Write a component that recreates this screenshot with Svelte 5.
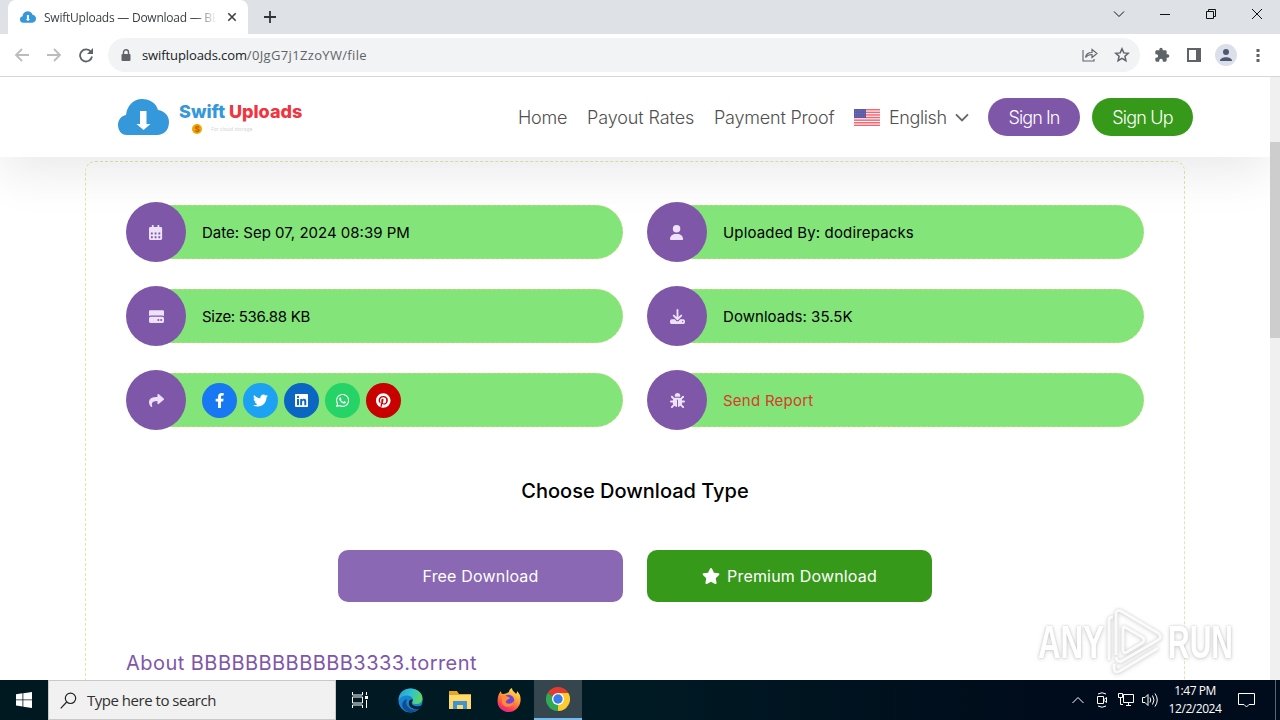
<script lang="ts">
  const details = [
    { icon: 'calendar', label: 'Date: Sep 07, 2024 08:39 PM' },
    { icon: 'user', label: 'Uploaded By: dodirepacks' },
    { icon: 'drive', label: 'Size: 536.88 KB' },
    { icon: 'download', label: 'Downloads: 35.5K' },
    { icon: 'share', label: '' },
    { icon: 'bug', label: 'Send Report' },
  ];

  const icons: Record<string, { box: string; path: string }> = {
    calendar: { box: '0 0 448 512', path: 'M0 464c0 27 21 48 48 48h352c27 0 48-21 48-48V192H0v272zm320-196c0-7 5-12 12-12h40c7 0 12 5 12 12v40c0 7-5 12-12 12h-40c-7 0-12-5-12-12v-40zm0 128c0-7 5-12 12-12h40c7 0 12 5 12 12v40c0 7-5 12-12 12h-40c-7 0-12-5-12-12v-40zM192 268c0-7 5-12 12-12h40c7 0 12 5 12 12v40c0 7-5 12-12 12h-40c-7 0-12-5-12-12v-40zm0 128c0-7 5-12 12-12h40c7 0 12 5 12 12v40c0 7-5 12-12 12h-40c-7 0-12-5-12-12v-40zM64 268c0-7 5-12 12-12h40c7 0 12 5 12 12v40c0 7-5 12-12 12H76c-7 0-12-5-12-12v-40zm0 128c0-7 5-12 12-12h40c7 0 12 5 12 12v40c0 7-5 12-12 12H76c-7 0-12-5-12-12v-40zM400 64h-48V16c0-9-7-16-16-16h-32c-9 0-16 7-16 16v48H160V16c0-9-7-16-16-16h-32c-9 0-16 7-16 16v48H48C21 64 0 85 0 112v80h448v-80c0-27-21-48-48-48z' },
    user: { box: '0 0 448 512', path: 'M224 256a128 128 0 1 0 0-256 128 128 0 0 0 0 256zm-46 48C80 304 0 384 0 482c0 17 13 30 30 30h388c17 0 30-13 30-30 0-98-80-178-178-178h-92z' },
    drive: { box: '0 0 512 512', path: 'M40 40h432q40 0 40 40v160q-24-20-52-20H52q-28 0-52 20V80q0-40 40-40zM52 268h408q52 0 52 52v108q0 48-48 48H48q-48 0-48-48V320q0-52 52-52zm268 72a34 34 0 1 0 0 68 34 34 0 0 0 0-68zm96 0a34 34 0 1 0 0 68 34 34 0 0 0 0-68z' },
    download: { box: '0 0 512 512', path: 'M288 32a32 32 0 1 0-64 0v242l-73-73a32 32 0 0 0-46 46l128 128a32 32 0 0 0 46 0l128-128a32 32 0 0 0-46-46l-73 73V32zM64 352c-35 0-64 29-64 64v32c0 35 29 64 64 64h384c35 0 64-29 64-64v-32c0-35-29-64-64-64H347l-46 45a64 64 0 0 1-90 0l-46-45H64zm368 56a24 24 0 1 1 0 48 24 24 0 0 1 0-48z' },
    share: { box: '0 0 512 512', path: 'M503.7 189.8 327.7 37.9C312.3 24.5 288 35.3 288 56v80.1C127.4 137.9 0 170.1 0 322.3c0 61.4 39.6 122.3 83.3 154.1 13.7 9.9 33.1-2.5 28.1-18.6C66.1 312.8 132.9 274.3 288 272.1V360c0 20.7 24.3 31.5 39.7 18.2l176-152c11.1-9.6 11.1-26.8 0-36.4z' },
    bug: { box: '0 0 512 512', path: 'M256 0c53 0 96 43 96 96v4c0 15-13 28-28 28H188c-15 0-28-13-28-28v-4c0-53 43-96 96-96zM41 105c13-12 33-12 46 0l64 64c1 1 2 2 3 4 11-8 25-13 38-13h128c14 0 27 5 38 13l3-4 64-64a32 32 0 0 1 46 46l-64 64-4 3c6 12 9 25 10 38h67a32 32 0 0 1 0 64h-64c0 25-5 48-15 69l6 4 64 64a32 32 0 0 1-46 46l-64-64c-24 22-55 37-89 40V240c0-9-7-16-16-16s-16 7-16 16v239c-34-3-65-18-89-40l-64 64a32 32 0 0 1-46-46l64-64 6-4c-10-21-15-44-15-69H32a32 32 0 0 1 0-64h67c1-14 4-27 10-38l-4-3-64-64c-12-13-12-33 0-46z' },
    star: { box: '0 0 576 512', path: 'M259.3 17.8 194 150.2 47.9 171.5c-26.2 3.8-36.7 36.1-17.7 54.6l105.7 103-25 145.5c-4.5 26.3 23.2 46 46.4 33.7L288 439.6l130.7 68.7c23.2 12.2 50.9-7.4 46.4-33.7l-25-145.5 105.7-103c19-18.5 8.5-50.8-17.7-54.6L382 150.2 316.7 17.8c-11.7-23.6-45.6-23.9-57.4 0z' },
    facebook: { box: '0 0 320 512', path: 'M279.1 288l14.2-92.7h-88.9v-60.1c0-25.4 12.4-50.1 52.2-50.1h40.4V6.3S260.4 0 225.4 0c-73.2 0-121.1 44.4-121.1 124.7v70.6H22.9V288h81.4v224h100.2V288z' },
    twitter: { box: '0 0 512 512', path: 'M459.4 151.7c.3 4.5.3 9.1.3 13.6 0 138.7-105.6 298.6-298.6 298.6-59.5 0-114.7-17.2-161.1-47.1 8.4 1 16.6 1.3 25.3 1.3 49.1 0 94.2-16.6 130.3-44.8-46.1-1-84.8-31.2-98.1-72.8 6.5 1 13 1.6 19.8 1.6 9.4 0 18.8-1.3 27.6-3.6-48.1-9.7-84.1-52-84.1-103v-1.3c14 7.8 30.2 12.7 47.4 13.3-28.3-18.8-46.8-51-46.8-87.4 0-19.5 5.2-37.4 14.3-53 51.7 63.7 129.3 105.3 216.4 109.8-1.6-7.8-2.6-15.9-2.6-24 0-57.8 46.8-104.9 104.9-104.9 30.2 0 57.5 12.7 76.7 33.1 23.7-4.5 46.5-13.3 66.6-25.3-7.8 24.4-24.4 44.8-46.1 57.8 21.1-2.3 41.6-8.1 60.4-16.2-14.3 20.8-32.2 39.3-52.6 54.3z' },
    linkedin: { box: '0 0 448 512', path: 'M416 32H31.9C14.3 32 0 46.5 0 64.3v383.4C0 465.5 14.3 480 31.9 480H416c17.6 0 32-14.5 32-32.3V64.3c0-17.8-14.4-32.3-32-32.3zM135.4 416H69V202.2h66.5V416zm-33.2-243c-21.3 0-38.5-17.3-38.5-38.5S80.9 96 102.2 96c21.2 0 38.5 17.3 38.5 38.5 0 21.3-17.2 38.5-38.5 38.5zm282.1 243h-66.4V312c0-24.8-.5-56.7-34.5-56.7-34.6 0-39.9 27-39.9 54.9V416h-66.4V202.2h63.7v29.2h.9c8.9-16.8 30.6-34.5 62.9-34.5 67.2 0 79.7 44.3 79.7 101.9V416z' },
    whatsapp: { box: '0 0 448 512', path: 'M380.9 97.1C339 55.1 283.2 32 223.9 32c-122.4 0-222 99.6-222 222 0 39.1 10.2 77.3 29.6 111L0 480l117.7-30.9c32.4 17.7 68.9 27 106.1 27h.1c122.3 0 224.1-99.6 224.1-222 0-59.3-25.2-115-67.1-157zM223.9 438.7c-33.2 0-65.7-8.9-94-25.7l-6.7-4-69.8 18.3L72 359.2l-4.4-7c-18.5-29.4-28.2-63.3-28.2-98.2 0-101.7 82.8-184.5 184.6-184.5 49.3 0 95.6 19.2 130.4 54.1 34.8 34.9 56.2 81.2 56.1 130.5 0 101.8-84.9 184.6-186.6 184.6zm101.2-138.2c-5.5-2.8-32.8-16.2-37.9-18-5.1-1.9-8.8-2.8-12.5 2.8-3.7 5.6-14.3 18-17.6 21.8-3.2 3.7-6.5 4.2-12 1.4-32.6-16.3-54-29.1-75.5-66-5.7-9.8 5.7-9.1 16.3-30.3 1.8-3.7.9-6.9-.5-9.7-1.4-2.8-12.5-30.1-17.1-41.2-4.5-10.8-9.1-9.3-12.5-9.5-3.2-.2-6.9-.2-10.6-.2-3.7 0-9.7 1.4-14.8 6.9-5.1 5.6-19.4 19-19.4 46.3 0 27.3 19.9 53.7 22.6 57.4 2.8 3.7 39.1 59.7 94.8 83.8 35.2 15.2 49 16.5 66.6 13.9 10.7-1.6 32.8-13.4 37.4-26.4 4.6-13 4.6-24.1 3.2-26.4-1.3-2.5-5-3.9-10.5-6.6z' },
    pinterest: { box: '0 0 496 512', path: 'M496 256c0 137-111 248-248 248-25.6 0-50.2-3.9-73.4-11.1 10.1-16.5 25.2-43.5 30.8-65 3-11.6 15.4-59 15.4-59 8.1 15.4 31.7 28.5 56.8 28.5 74.8 0 128.7-68.8 128.7-154.3 0-81.9-66.9-143.2-152.9-143.2-107 0-163.9 71.8-163.9 150.1 0 36.4 19.4 81.7 50.3 96.1 4.7 2.2 7.2 1.2 8.3-3.3.8-3.4 5-20.3 6.9-28.1.6-2.5.3-4.7-1.7-7.1-10.1-12.5-18.3-35.3-18.3-56.6 0-54.7 41.4-107.6 112-107.6 60.9 0 103.6 41.5 103.6 100.9 0 67.1-33.9 113.6-78 113.6-24.3 0-42.6-20.1-36.7-44.8 7-29.5 20.5-61.3 20.5-82.6 0-19-10.2-34.9-31.4-34.9-24.9 0-44.9 25.7-44.9 60.2 0 22 7.4 36.8 7.4 36.8s-24.5 103.8-29 123.2c-5 21.4-3 51.6-.9 71.2C65.4 450.9 0 361.1 0 256 0 119 111 8 248 8s248 111 248 248z' },
  };

  const socials = ['facebook', 'twitter', 'linkedin', 'whatsapp', 'pinterest'];
  const stripes = [0, 1, 2, 3, 4, 5, 6];
</script>

{#snippet glyph(name: string)}
  <svg class="glyph" viewBox={icons[name].box} aria-hidden="true"><path d={icons[name].path} /></svg>
{/snippet}

{#snippet cloud()}
  <svg class="cloud" viewBox="0 0 51 36" aria-hidden="true">
    <path fill="#3498db" d="M9 36C3 36 0 31 0 26c0-5 3-9 8-10C9 7 15 0 24 0c8 0 14 4 16 11 7 1 11 6 11 12 0 8-5 13-12 13z" />
    <path fill="#fff" d="M22 12h6.500v13h4L25.500 31l-7-6H22z" />
  </svg>
{/snippet}

<div class="screen">
  <div class="tabs">
    <div class="tab">
      {@render cloud()}
      <span class="tab-title">SwiftUploads — Download — BB</span>
      <svg width="10" height="10" viewBox="0 0 10 10"><path d="M1.3 1.3l7.4 7.4M8.7 1.3L1.3 8.7" stroke="#3c4043" stroke-width="1.6" /></svg>
    </div>
    <svg class="plus" width="12" height="12" viewBox="0 0 12 12"><path d="M6 0v12M0 6h12" stroke="#303338" stroke-width="1.8" /></svg>
    <div class="window-controls">
      <svg width="12" height="12" viewBox="0 0 12 12"><path d="M1 3.5l5 5 5-5" /></svg>
      <svg width="12" height="12" viewBox="0 0 12 12"><path d="M1 6.5h10" /></svg>
      <svg width="12" height="12" viewBox="0 0 12 12"><path d="M1.5 3.5h7v7h-7zM3.5 3V1.5h7v7H9" /></svg>
      <svg width="12" height="12" viewBox="0 0 12 12"><path d="M1 1l10 10M11 1L1 11" /></svg>
    </div>
  </div>

  <div class="toolbar">
    <svg width="16" height="16" viewBox="0 0 16 16" class="faded"><path d="M15 8H2M8 2L2 8l6 6" /></svg>
    <svg width="16" height="16" viewBox="0 0 16 16" class="faded"><path d="M1 8h13M8 2l6 6-6 6" /></svg>
    <svg width="16" height="16" viewBox="0 0 16 16" class="reload"><path d="M13 5A6 6 0 1 0 14 9.5" /><path class="solid" d="M15 1v6H9z" /></svg>
    <div class="address">
      <svg class="lock" width="10" height="13" viewBox="0 0 10 13"><rect x="0.5" y="5" width="9" height="7" rx="1" fill="#5f6368" /><path d="M2.5 5V3.3a2.5 2.5 0 0 1 5 0V5" fill="none" stroke="#5f6368" stroke-width="1.4" /></svg>
      <span class="url"><b>swiftuploads.com</b>/0JgG7j1ZzoYW/file</span>
      <svg class="thin" width="16" height="16" viewBox="0 0 16 16"><path d="M1 3v11h11v-2M3.5 10.5C4 7 6 5.5 10 5.5V2.5l5 4-5 4v-3c-3 0-5 1-6.5 3z" /></svg>
      <svg class="thin bold" width="16" height="16" viewBox="0 0 16 16"><path d="M8 1.8l1.8 4.1 4.4.4-3.3 2.9 1 4.4L8 11.3l-3.9 2.3 1-4.4-3.3-2.9 4.4-.4z" /></svg>
    </div>
    <div class="actions">
      <svg width="16" height="16" viewBox="0 0 24 24"><path d="M20.5 11H19V7c0-1.100-.9-2-2-2h-4V3.500a2.500 2.500 0 0 0-5 0V5H4c-1.100 0-2 .9-2 2v3.800h1.500a2.700 2.700 0 0 1 0 5.400H2V20c0 1.100.9 2 2 2h3.800v-1.500a2.700 2.700 0 0 1 5.400 0V22H17c1.100 0 2-.9 2-2v-4h1.500a2.500 2.500 0 0 0 0-5z" fill="#5f6368" /></svg>
      <svg width="16" height="16" viewBox="0 0 16 16"><path d="M1 1h14v14H1zM3 3v10h7V3z" fill="#5f6368" fill-rule="evenodd" /></svg>
      <svg width="22" height="22" viewBox="0 0 22 22"><circle cx="11" cy="11" r="11" fill="#dadfe9" /><circle cx="11" cy="8" r="3" fill="#4d5870" /><path d="M5 17c0-5 12-5 12 0z" fill="#4d5870" /></svg>
      <svg width="4" height="16" viewBox="0 0 4 16"><path d="M.5 2h3v3h-3zM.5 7h3v3h-3zM.5 12h3v3h-3z" fill="#5f6368" /></svg>
    </div>
  </div>

  <div class="viewport">
    <div class="page">
      <header>
        <div class="logo">
          {@render cloud()}
          <div class="wordmark">
            <div class="brand"><span class="blue">Swift</span> <span class="red">Uploads</span></div>
            <div class="tagline"><i>$</i><span>For cloud storage</span></div>
          </div>
        </div>
        <nav>
          <a class="home" href="/">Home</a>
          <a class="rates" href="/rates">Payout Rates</a>
          <a class="proof" href="/proof">Payment Proof</a>
          <svg class="flag" width="26" height="17" viewBox="0 0 26 17">
            <rect width="26" height="17" fill="#fff" />
            {#each stripes as s}<rect y={s * 2.6} width="26" height="1.5" fill="#f56573" />{/each}
            <rect width="12" height="9" fill="#5b59a8" />
            <path d="M1 2h10M1 4.500h10M1 7h10" stroke="#8583c4" stroke-width=".8" stroke-dasharray="1 1.200" />
          </svg>
          <span class="lang">English</span>
          <svg class="chevron" width="14" height="9" viewBox="0 0 14 9"><path d="M1 1.300l6 6 6-6" fill="none" stroke="#666" stroke-width="1.900" /></svg>
          <button class="pill sign-in"><span>Sign In</span></button>
          <button class="pill sign-up"><span>Sign Up</span></button>
        </nav>
      </header>

      <main>
        <div class="details">
          {#each details as item}
            <div class="detail">
              <div class="badge">{@render glyph(item.icon)}</div>
              <div class="bar">
                {#if item.icon === 'share'}
                  <div class="socials">
                    {#each socials as name}
                      <span class="social {name}">{@render glyph(name)}</span>
                    {/each}
                  </div>
                {:else}
                  <span class="label {item.icon}">{item.label}</span>
                {/if}
              </div>
            </div>
          {/each}
        </div>

        <h2>Choose Download Type</h2>

        <div class="choices">
          <button class="free"><span>Free Download</span></button>
          <button class="premium">{@render glyph('star')}<span>Premium Download</span></button>
        </div>

        <h3>About BBBBBBBBBBBB3333.torrent</h3>
      </main>
    </div>
    <div class="scrollbar"><div class="thumb"></div></div>
  </div>

  <div class="taskbar">
    <div class="start"><svg width="16" height="16" viewBox="0 0 16 16"><path fill="#fff" d="M0 2.200L6.500 1.300v6.200H0zM7.300 1.200L16 0v7.500H7.300zM0 8.300h6.500v6.200L0 13.600zM7.300 8.300H16V16l-8.700-1.300z" /></svg></div>
    <div class="search">
      <svg width="17" height="17" viewBox="0 0 17 17"><circle cx="10.500" cy="6.300" r="5.200" /><path d="M6.700 10L.7 16.300" /></svg>
      <span>Type here to search</span>
    </div>
    <div class="apps">
      <div class="app">
        <svg width="17" height="16" viewBox="0 0 17 16"><path d="M.5 0v3h10V0M.5 16v-3h10v3M.5 5h10v6H.500zM14.500 0v3M14.500 8v8" fill="none" stroke="#fff" /><path d="M13 4h3v3h-3z" fill="#fff" /></svg>
      </div>
      <div class="app">
        <svg width="25" height="25" viewBox="0 0 25 25">
          <defs>
            <linearGradient id="wave" x1="0" y1="0" x2="1" y2=".3"><stop stop-color="#259be0" /><stop offset=".6" stop-color="#32c5c8" /><stop offset="1" stop-color="#5ad468" /></linearGradient>
          </defs>
          <circle cx="12.500" cy="12.500" r="12" fill="#1685d2" />
          <path d="M.6 12C1 4.500 6 .5 12.500.5S25 5 24.500 11c-.3 4-4 5.500-8 5-3-.4-2-1.500-1.500-3C16 7 5 5 .6 12z" fill="url(#wave)" />
          <path d="M9 11c-3 7 4 13 12 10-5 5-13 4-16-1-2-4 0-8 4-9z" fill="#114d93" />
          <path d="M15 12c-2 2-2 5 2 6 3 .7 5 0 7-1-1 2-2 3-3 4-7 1-11-3-10-7 .3-2 2-3 4-2z" fill="#061f2c" />
        </svg>
      </div>
      <div class="app">
        <svg width="22" height="19" viewBox="0 0 22 19"><path d="M0 0h8l2 3h12v15H0z" fill="#e8a52b" /><path d="M0 4h22v14H0z" fill="#ffd96b" /><path d="M4 10h14v8h-4v-4H8v4H4z" fill="#3f95d2" /></svg>
      </div>
      <div class="app">
        <svg width="24" height="24" viewBox="0 0 24 24">
          <defs><linearGradient id="fire" x1=".8" y1="0" x2=".3" y2="1"><stop stop-color="#fff05a" /><stop offset=".45" stop-color="#ff9636" /><stop offset=".8" stop-color="#ff3d55" /><stop offset="1" stop-color="#d9258f" /></linearGradient></defs>
          <path d="M12 24C5 24 0 19 .6 12 .8 8 2 5 4 3c0 2 .5 3 2 3 2 0 4-1 6-2 0-2 1-3 3-4 0 3 3 4 4 6 1-1 1-2 1-3 3 3 4 6 3.500 10C23 19 18 24 12 24z" fill="url(#fire)" />
          <circle cx="11.500" cy="12.500" r="5.700" fill="#6b45d6" />
          <path d="M5 8c4-1 6 1 8 2-1 2-4 1-4 4 0 2 5 3 8-1 0 6-8 8-12 3z" fill="#ff8a39" />
        </svg>
      </div>
      <div class="app active">
        <svg width="24" height="24" viewBox="0 0 24 24">
          <path d="M12 12L1.600 6A12 12 0 0 1 22.400 6z" fill="#e33b2e" />
          <path d="M12 12L1.600 6A12 12 0 0 0 12 24l5-9z" fill="#31a851" />
          <path d="M12 12V6h10.400A12 12 0 0 1 12 24z" fill="#fccb30" />
          <circle cx="12" cy="12" r="6" fill="#fff" /><circle cx="12" cy="12" r="4.700" fill="#397ee8" />
        </svg>
      </div>
    </div>
    <div class="tray">
      <svg width="12" height="16" viewBox="0 0 12 16"><path d="M.5 11L6 5.500l5.500 5.500" /></svg>
      <svg class="camera" width="12" height="16" viewBox="0 0 12 16"><path d="M1.500 4.500h6v7h-6zM8 7.500l2.500-2v5L8 8.500M2 2q4-2.500 8 0M2 14q4 2.500 8 0" /></svg>
      <svg class="network" width="17" height="16" viewBox="0 0 17 16"><path d="M5.500 2.500h10v8h-10zM8 13.500h5M10.500 11v2M.5 1.500h4v4h-4zM2.500 6v6.500H5" /></svg>
      <svg class="volume" width="17" height="16" viewBox="0 0 17 16"><path d="M.5 5.500H3l3-3v11l-3-3H.5zM8 5.500q1.500 2.500 0 5M10.500 3.500q3 4.500 0 9M13 1.500q4.500 6.500 0 13" /></svg>
      <div class="clock"><span>1:47 PM</span><span>12/2/2024</span></div>
      <svg class="notices" width="17" height="16" viewBox="0 0 17 16"><path d="M.5 1.500h16v11h-5.500l-2.500 2.500L6 12.500H.5z" /></svg>
      <div class="peek"></div>
    </div>
  </div>

  <svg class="watermark" width="204" height="72" viewBox="0 0 204 72" aria-hidden="true">
    <g class="word">
      <text x="4" y="52" textLength="66" lengthAdjust="spacingAndGlyphs">ANY</text>
      <text x="134" y="52" textLength="65" lengthAdjust="spacingAndGlyphs">RUN</text>
    </g>
    <path d="M75 54V14q0-3 4-3M82 49V8q0-5 5-3l37 22q5 4 0 7L88 55q-5 2-6-4M89 20v24q0 4 4 2l15-9q4-3 0-6L89 20M80 58v4q0 6 6 3l38-23" />
  </svg>
</div>

<style>
  :global(body) { margin: 0; }

  * { box-sizing: border-box; }
  button { border: 0; padding: 0; font: inherit; color: inherit; }
  svg { flex-shrink: 0; display: block; }

  .screen {
    position: relative;
    width: 1280px;
    height: 720px;
    overflow: hidden;
    display: flex;
    flex-direction: column;
    background: #fff;
    font-family: Inter, 'Open Sans', sans-serif;
  }

  /* Browser chrome */
  .tabs {
    height: 34px;
    background: #dee1e6;
    display: flex;
    align-items: center;
    padding-left: 8px;
  }

  .tab {
    width: 240px;
    height: 34px;
    display: flex;
    align-items: center;
    padding: 0 11px 0 12px;
    background: #fff;
    border-radius: 8px 8px 0 0;
  }
  .tab .cloud { width: 16px; height: 12px; margin-right: 8px; }

  .tab-title {
    width: 172px;
    margin-right: 11px;
    white-space: nowrap;
    font: 12px 'Open Sans', sans-serif;
    letter-spacing: -0.24px;
    color: #3c4043;
    mask-image: linear-gradient(90deg, #000 152px, transparent 172px);
  }

  .plus { margin-left: 16px; }
  .window-controls { margin-left: auto; display: flex; gap: 34px; padding: 0 17px 6px 0; }
  .window-controls svg { fill: none; stroke: #111; stroke-width: 1; }

  .toolbar {
    height: 43px;
    border-bottom: 1px solid #d4d6d9;
    display: flex;
    align-items: center;
    padding: 0 20px 0 14px;
    gap: 16px;
  }
  .toolbar > svg { fill: none; stroke: #5f6368; stroke-width: 1.8; }
  .toolbar > .faded { stroke: #babcbe; }
  .reload .solid { fill: #5f6368; stroke: none; }

  .address {
    width: 1032px;
    height: 34px;
    margin-left: -2px;
    flex-shrink: 0;
    border-radius: 17px;
    background: #f1f3f4;
    display: flex;
    align-items: center;
    padding: 0 10px 0 13px;
    gap: 16px;
  }
  .url { margin: 0 auto 0 -5px; font: 13px 'Open Sans', sans-serif; letter-spacing: 0.34px; color: #5f6368; }
  .url b { font-weight: 400; letter-spacing: -0.1px; color: #202124; }
  .thin { fill: none; stroke: #5f6368; stroke-width: 1.1; }
  .thin.bold { stroke-width: 1.5; }
  .actions { display: flex; align-items: center; margin-left: -2px; gap: 16px; }
  .actions svg:nth-child(3) { margin: 0 3px 0 -3px; }

  /* Page */
  .viewport { height: 603px; display: flex; overflow: hidden; }
  .page { width: 1270px; height: 603px; overflow: hidden; }
  .scrollbar { width: 10px; background: #f0f0f0; padding-top: 65px; }
  .thumb { height: 196px; background: #cdcdcd; }

  header {
    position: relative;
    height: 80px;
    background: #fff;
    box-shadow: 0 16px 48px rgba(0, 0, 0, 0.085);
    display: flex;
    align-items: center;
    padding: 0 77px 0 118px;
  }

  .logo { display: flex; gap: 10px; align-items: center; }
  .logo .cloud { width: 51px; height: 36px; }
  .wordmark { height: 36px; }
  .brand { font: 800 18px/25px Inter, sans-serif; letter-spacing: 0; white-space: nowrap; }
  .blue { color: #3498db; }
  .red { color: #ee3540; }
  .tagline { display: flex; align-items: center; margin-left: 13px; gap: 9px; font-size: 5px; color: #d5d5d5; }
  .tagline i { width: 10px; height: 10px; border-radius: 50%; background: #f5a400; color: #b96400; font: bold 8px/10px Inter, sans-serif; text-align: center; }

  nav {
    margin-left: auto;
    display: flex;
    align-items: center;
    font-size: 18px;
    font-weight: 300;
    color: #505050;
    white-space: nowrap;
  }
  nav a { color: inherit; text-decoration: none; }
  .home { width: 69px; letter-spacing: -0.2px; }
  .rates { width: 127px; letter-spacing: -0.1px; }
  .proof { width: 140px; letter-spacing: -0.2px; }
  .lang { margin-left: 9px; width: 58px; letter-spacing: -0.4px; }
  .chevron { margin-left: 8px; margin-right: 19px; }
  .pill { height: 38px; border-radius: 19px; color: #fff; }
  .sign-in { width: 92px; background: #7f57a9; letter-spacing: -0.9px; }
  .sign-up { width: 101px; margin-left: 12px; background: #36991a; letter-spacing: -0.8px; }

  main {
    width: 1100px;
    height: 640px;
    margin: 4px 0 0 85px;
    border: 1px dashed #dde8ae;
    border-radius: 10px;
    padding: 40px;
    font-size: 16px;
    color: #000;
  }

  .details { width: 1018px; display: grid; grid-template-columns: 1fr 1fr; gap: 24px; }
  .detail { height: 60px; display: flex; align-items: center; }
  .badge {
    position: relative;
    z-index: 1;
    width: 60px;
    height: 60px;
    border-radius: 50%;
    background: #7f57a9;
    color: #eee2fa;
    display: grid;
    place-items: center;
  }
  .glyph { height: 15px; fill: currentColor; }

  .bar {
    flex: 1;
    height: 54px;
    margin-left: -30px;
    padding-left: 45px;
    border: 1px dashed #b4df73;
    border-radius: 0 27px 27px 0;
    background: #82e479;
    display: flex;
    align-items: center;
  }
  .label { white-space: nowrap; font-size: 15px; }
  .label.user { letter-spacing: 0.15px; }
  .label.drive { letter-spacing: -0.3px; }
  .label.download { letter-spacing: 0.05px; }
  .label.bug { letter-spacing: 0.25px; color: #da3a2c; }
  .socials { display: flex; gap: 6px; }
  .social { width: 35px; height: 35px; border-radius: 50%; display: grid; place-items: center; color: #fff; }
  .facebook { background: #1877f2; }
  .twitter { background: #1da1f2; }
  .linkedin { background: #0a66c2; }
  .whatsapp { background: #25d366; }
  .pinterest { background: #c80000; }

  h2 { width: 1018px; margin: 46px 0 0; font-size: 20px; line-height: 30px; font-weight: 500; text-align: center; }
  .choices { width: 1018px; margin-top: 44px; display: flex; justify-content: center; gap: 24px; }
  .choices button {
    width: 285px;
    height: 52px;
    border-radius: 10px;
    color: #fff;
    display: flex;
    align-items: center;
    justify-content: center;
    gap: 7px;
    letter-spacing: 0.18px;
  }
  .choices .glyph { height: 16px; }
  .free { background: #8a68b3; }
  .premium { background: #36991a; }
  h3 { margin: 46px 0 0; font-size: 20px; line-height: 30px; font-weight: 400; letter-spacing: 0.46px; color: #7f57a9; white-space: nowrap; }

  /* Taskbar */
  .taskbar { height: 40px; background: linear-gradient(90deg, #001820, #001a24 50%, #000c1b 80%); display: flex; color: #fff; }
  .start { width: 48px; display: grid; place-items: center; }
  .search {
    width: 288px;
    background: #f1f1f1;
    border: 1px solid #c8c8c8;
    display: flex;
    align-items: center;
    gap: 10px;
    padding-left: 11px;
    font: 15px 'Open Sans', sans-serif;
    letter-spacing: -0.48px;
    color: #303030;
  }
  .search svg { fill: none; stroke: #222; stroke-width: 1.2; }
  .apps { display: flex; }
  .app { width: 49.33px; display: grid; place-items: center; }
  .app:first-child { width: 50px; padding-right: 2px; }
  .app.active { width: 48px; background: #35464f; border-bottom: 2px solid #76b9ed; }
  .tray { margin-left: auto; display: flex; align-items: center; }
  .tray svg { fill: none; stroke: #fff; stroke-width: 1; margin-right: 12px; }
  .tray .camera { margin-right: 10px; }
  .tray .network { margin-right: 7px; }
  .tray .volume { margin-right: 7px; }
  .clock { width: 58px; margin-right: 14px; display: flex; flex-direction: column; text-align: center; font: 12px/18px 'Open Sans', sans-serif; letter-spacing: -0.45px; }
  .tray .notices { margin-right: 20px; }
  .peek { width: 5px; height: 40px; border-left: 1px solid #5b6371; }

  .watermark {
    position: absolute;
    left: 1034px;
    top: 606px;
    fill: none;
    stroke: rgba(255, 255, 255, 0.9);
    stroke-width: 3;
    filter: drop-shadow(0 0 1px #8885) drop-shadow(0 1px 2px #8885);
  }
  .word { fill: #fff; stroke: none; font: bold 46px 'Liberation Sans', sans-serif; }
</style>
